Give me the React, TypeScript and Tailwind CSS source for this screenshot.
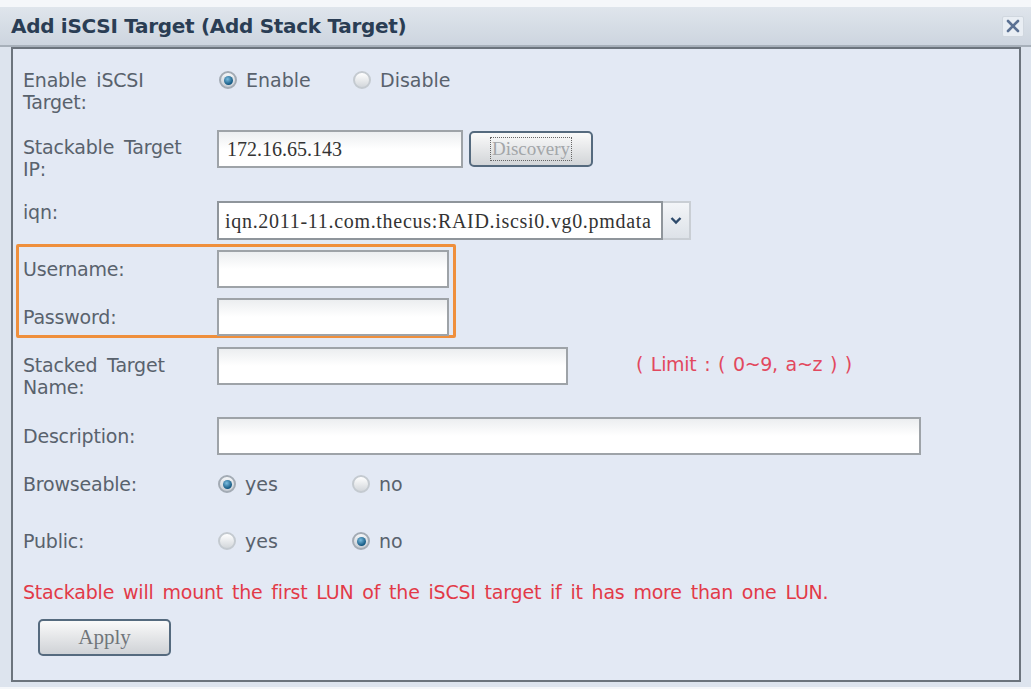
import React from "react";

const sans = { fontFamily: '"DejaVu Sans", Verdana, sans-serif' };
const serif = { fontFamily: '"Liberation Serif", "Times New Roman", serif' };

function Radio({ checked, label }: { checked?: boolean; label: string }) {
  return (
    <label className="flex items-center gap-[9px] w-[134px]">
      {checked ? (
        <span className="w-[18px] h-[18px] rounded-full border-2 border-[#a3abb4] bg-gradient-to-b from-[#f4f6f8] to-[#c6ccd3] flex items-center justify-center">
          <span className="w-[9px] h-[9px] rounded-full bg-[radial-gradient(circle_at_40%_35%,#7bbde0,#125781_70%)]" />
        </span>
      ) : (
        <span className="w-[18px] h-[18px] rounded-full border-2 border-[#c4cad0] bg-gradient-to-b from-[#ffffff] to-[#d3d7db]" />
      )}
      <span className="text-[19px] text-[#59626d]">{label}</span>
    </label>
  );
}

function TextBox({ w, value }: { w: string; value?: string }) {
  return (
    <div
      className={`${w} h-[38px] border-2 border-[#9ea3a8] bg-gradient-to-b from-[#eceef0] via-white to-[#ffffff] flex items-center px-[8px] text-[20px] text-[#333]`}
      style={serif}
    >
      {value}
    </div>
  );
}

function Label({ children, className = "" }: { children: React.ReactNode; className?: string }) {
  return (
    <div className={`w-[194px] shrink-0 text-[19px] leading-[22px] text-[#59626d] tracking-[-0.2px] [word-spacing:4px] ${className}`}>
      {children}
    </div>
  );
}

export default function App() {
  return (
    <div className="w-[1031px] h-[689px] bg-[#f5f7fa] pt-[7px] overflow-hidden" style={sans}>
      {/* title bar */}
      <div className="h-[40px] bg-gradient-to-b from-[#dfe5ec] to-[#cdd5df] border-b-2 border-[#a7b0ba] flex items-center justify-between pl-[11px] pr-[7px]">
        <span className="text-[20px] font-bold text-[#2a3d54] tracking-[-0.3px]">Add iSCSI Target (Add Stack Target)</span>
        <span className="w-[22px] h-[21px] bg-[#e9eef4] border border-[#d0d7df] rounded-[2px] flex items-center justify-center">
          <svg width="14" height="14" viewBox="0 0 14 14">
            <path d="M2 2 L12 12 M12 2 L2 12" stroke="#5b7193" strokeWidth="2.6" strokeLinecap="round" />
          </svg>
        </span>
      </div>

      <div className="bg-[#dde4ee] pl-[11px] pr-[10px] pb-[5px] h-[640px]">
        <div className="h-full border-2 border-[#6c747d] bg-[#e3e9f4] pl-[8px] pt-[20px] flex flex-col">
          {/* enable */}
          <div className="flex items-start pl-[2px]">
            <Label>
              Enable iSCSI
              <br />
              Target:
            </Label>
            <div className="flex items-center pl-[2px] h-[22px]">
              <Radio checked label="Enable" />
              <Radio label="Disable" />
            </div>
          </div>

          {/* stackable ip */}
          <div className="flex items-start pl-[2px] mt-[17px]">
            <Label className="pt-[6px]">
              Stackable Target
              <br />
              IP:
            </Label>
            <div className="flex items-center gap-[6px]">
              <TextBox w="w-[246px]" value="172.16.65.143" />
              <button className="w-[124px] h-[36px] rounded-[5px] border-2 border-[#556a7e] bg-gradient-to-b from-[#fafafa] to-[#d2d5d8] flex items-center justify-center">
                <span className="border border-dotted border-[#666] px-[1px] leading-[22px] text-[19px] text-[#a3a6a9]" style={serif}>
                  Discovery
                </span>
              </button>
            </div>
          </div>

          {/* iqn */}
          <div className="flex items-start pl-[2px] mt-[21px]">
            <Label>iqn:</Label>
            <div className="flex">
              <div
                className="w-[446px] h-[39px] border-2 border-[#8f959b] bg-white flex items-center px-[6px] text-[20px] tracking-[0.7px] text-[#333] whitespace-nowrap overflow-hidden"
                style={serif}
              >
                iqn.2011-11.com.thecus:RAID.iscsi0.vg0.pmdata
              </div>
              <div className="w-[28px] h-[39px] border-y-2 border-r-2 border-[#c9ced4] bg-gradient-to-b from-[#f3f5f8] to-[#dde2e8] flex items-center justify-center">
                <svg width="12" height="9" viewBox="0 0 12 9">
                  <path d="M1.5 2 L6 6.5 L10.5 2" stroke="#2d4a6b" strokeWidth="2.4" fill="none" />
                </svg>
              </div>
            </div>
          </div>

          {/* credentials box */}
          <div className="mt-[4px] -ml-[5px] w-[440px] h-[94px] border-[3px] border-[#ef8f3c] rounded-[2px] pl-[4px] pt-[3px] flex flex-col gap-[10px]">
            <div className="flex items-center">
              <Label>Username:</Label>
              <TextBox w="w-[232px]" />
            </div>
            <div className="flex items-center">
              <Label>Password:</Label>
              <TextBox w="w-[232px]" />
            </div>
          </div>

          {/* stacked target name */}
          <div className="flex items-start pl-[2px] mt-[9px]">
            <Label className="pt-[7px]">
              Stacked Target
              <br />
              Name:
            </Label>
            <TextBox w="w-[351px]" />
            <span className="ml-[68px] mt-[3px] text-[19px] text-[#e2485e] tracking-[-0.3px] [word-spacing:2px]">
              ( Limit : ( 0~9, a~z ) )
            </span>
          </div>

          {/* description */}
          <div className="flex items-center pl-[2px] mt-[19px]">
            <Label>Description:</Label>
            <TextBox w="w-[704px]" />
          </div>

          {/* browseable */}
          <div className="flex items-center pl-[2px] mt-[18px] h-[22px]">
            <Label>Browseable:</Label>
            <div className="flex items-center pl-[1px]">
              <Radio checked label="yes" />
              <Radio label="no" />
            </div>
          </div>

          {/* public */}
          <div className="flex items-center pl-[2px] mt-[35px] h-[22px]">
            <Label>Public:</Label>
            <div className="flex items-center pl-[1px]">
              <Radio label="yes" />
              <Radio checked label="no" />
            </div>
          </div>

          <p className="pl-[2px] mt-[29px] text-[19px] leading-[22px] text-[#e23a48] tracking-[-0.2px] [word-spacing:3px]">
            Stackable will mount the first LUN of the iSCSI target if it has more than one LUN.
          </p>

          <button
            className="ml-[17px] mt-[16px] w-[133px] h-[37px] rounded-[5px] border-2 border-[#556a7e] bg-gradient-to-b from-[#fafafa] to-[#cfd2d6] text-[21px] text-[#70757a]"
            style={serif}
          >
            Apply
          </button>
        </div>
      </div>
    </div>
  );
}
